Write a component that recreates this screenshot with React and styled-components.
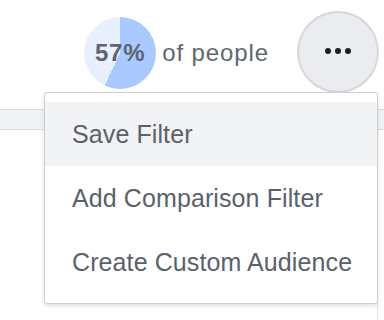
import React from "react";
import styled, { createGlobalStyle } from "styled-components";

const GlobalStyle = createGlobalStyle`
  html, body {
    margin: 0;
    padding: 0;
    background: #ffffff;
    font-family: "Liberation Sans", Arial, sans-serif;
    color: #606770;
  }
`;

const Page = styled.div`
  position: relative;
  width: 384px;
  height: 320px;
  overflow: hidden;
  background: #fff;
`;

const Header = styled.div`
  display: flex;
  align-items: center;
  justify-content: flex-end;
  height: 82px;
  padding: 12px 5px 0 0;
  box-sizing: content-box;
`;

const Stat = styled.div`
  display: flex;
  align-items: center;
  margin-right: 28px;
`;

const Pie = styled.div`
  position: relative;
  width: 72px;
  height: 72px;
  border-radius: 50%;
  background: conic-gradient(#aac9ff 0deg ${(p) => p.$pct * 3.6}deg, #e8f0fe ${(p) => p.$pct * 3.6}deg 360deg);
  display: flex;
  align-items: center;
  justify-content: center;
`;

const Percent = styled.span`
  font-size: 24px;
  font-weight: bold;
  letter-spacing: 0.8px;
  color: #5d6470;
  white-space: nowrap;
`;

const Label = styled.span`
  font-size: 24px;
  letter-spacing: 0.9px;
  margin-left: 6px;
  color: #606770;
`;

const MoreButton = styled.button`
  width: 82px;
  height: 82px;
  border-radius: 50%;
  border: 2px solid #d6d8dc;
  background: #ebecf0;
  display: flex;
  align-items: center;
  justify-content: center;
  gap: 4px;
  padding: 0 0 2px 0;
  margin-top: -2px;
`;

const Dot = styled.span`
  width: 6px;
  height: 6px;
  border-radius: 50%;
  background: #1c1e21;
`;

const Band = styled.div`
  margin-top: 15px;
  height: 19px;
  background: #f0f2f5;
  border-top: 1px solid #d8dbdf;
  border-bottom: 1px solid #d8dbdf;
`;

const Panel = styled.div`
  width: 377px;
  height: 200px;
  border-right: 1px solid #dcdfe3;
`;

const Menu = styled.ul`
  position: absolute;
  left: 44px;
  top: 92px;
  width: 332px;
  margin: 0;
  padding: 9px 0;
  list-style: none;
  background: #fff;
  border: 1px solid #ccd0d5;
  border-radius: 3px;
  box-shadow: 0 2px 4px rgba(0, 0, 0, 0.12);
`;

const Item = styled.li`
  height: 64px;
  display: flex;
  align-items: center;
  padding-left: 27px;
  font-size: 25px;
  letter-spacing: 0.1px;
  color: #5b616b;
  background: ${(p) => (p.$active ? "#f2f3f5" : "transparent")};
`;

export default function App() {
  return (
    <Page>
      <GlobalStyle />
      <Header>
        <Stat>
          <Pie $pct={57}>
            <Percent>57%</Percent>
          </Pie>
          <Label>of people</Label>
        </Stat>
        <MoreButton>
          <Dot />
          <Dot />
          <Dot />
        </MoreButton>
      </Header>
      <Band />
      <Panel />
      <Menu>
        <Item $active>Save Filter</Item>
        <Item>Add Comparison Filter</Item>
        <Item>Create Custom Audience</Item>
      </Menu>
    </Page>
  );
}
